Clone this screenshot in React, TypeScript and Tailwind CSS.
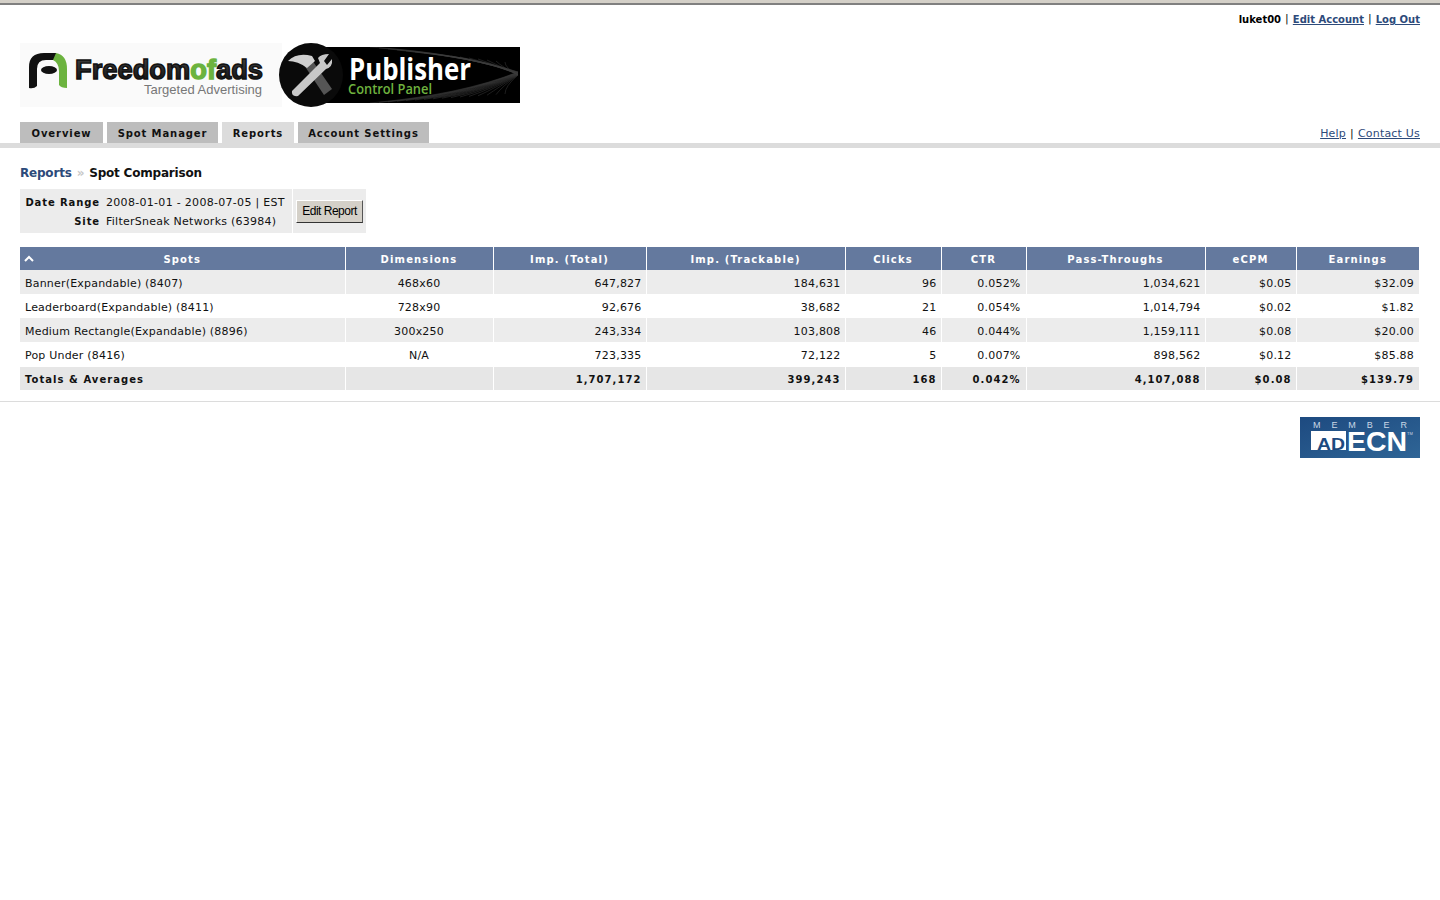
import React from "react";

const font = "font-['DejaVu_Sans','Liberation_Sans',sans-serif]";

const columns = [
  { label: "Spots", width: "w-[325px]" },
  { label: "Dimensions", width: "w-[148px]" },
  { label: "Imp. (Total)", width: "w-[153px]" },
  { label: "Imp. (Trackable)", width: "w-[199px]" },
  { label: "Clicks", width: "w-[96px]" },
  { label: "CTR", width: "w-[85px]" },
  { label: "Pass-Throughs", width: "w-[179px]" },
  { label: "eCPM", width: "w-[91px]" },
  { label: "Earnings", width: "w-[123px]" },
];

const rows = [
  ["Banner(Expandable) (8407)", "468x60", "647,827", "184,631", "96", "0.052%", "1,034,621", "$0.05", "$32.09"],
  ["Leaderboard(Expandable) (8411)", "728x90", "92,676", "38,682", "21", "0.054%", "1,014,794", "$0.02", "$1.82"],
  ["Medium Rectangle(Expandable) (8896)", "300x250", "243,334", "103,808", "46", "0.044%", "1,159,111", "$0.08", "$20.00"],
  ["Pop Under (8416)", "N/A", "723,335", "72,122", "5", "0.007%", "898,562", "$0.12", "$85.88"],
];

const totals = ["Totals & Averages", "", "1,707,172", "399,243", "168", "0.042%", "4,107,088", "$0.08", "$139.79"];

const waves = Array.from({ length: 16 }, (_, i) => i);

// numeric cells sit 1px closer to the column edge, except CTR and the last column
function cellAlign(i: number) {
  if (i === 0) return "pl-[5px] pr-[5px] text-left";
  if (i === 1) return "px-[5px] text-center";
  if (i === 5 || i === 8) return "pl-[5px] pr-[5px] text-right";
  return "pl-[5px] pr-[4px] text-right";
}

function Logo() {
  return (
    <svg width="500" height="64" viewBox="0 0 500 64" className="block">
      <defs>
        <linearGradient id="word" x1="0" y1="0" x2="0" y2="1">
          <stop offset="0" stopColor="#444" />
          <stop offset="1" stopColor="#0c0c0c" />
        </linearGradient>
        <clipPath id="banner">
          <rect x="290" y="4" width="210" height="56" />
        </clipPath>
      </defs>
      <rect x="0" y="0" width="262" height="64" fill="#fafafa" />
      {/* F/A mark */}
      <path d="M9 45 V24 Q9 10 24 10 H36 L37 17 H26 Q17 17 17 26 V43 Q14 46 9 45Z" fill="#111" />
      <path d="M36 10 Q47 12 47 26 V45 Q41 45 39 42 V28 Q39 20 33 17Z" fill="#6cb33f" />
      <ellipse cx="29" cy="27" rx="8" ry="4" fill="#111" />
      <text x="55" y="36" fontFamily="Liberation Sans" fontWeight="700" fontSize="27" stroke="#111" strokeWidth="1.4" textLength="188" lengthAdjust="spacingAndGlyphs">
        <tspan fill="url(#word)">Freedom</tspan>
        <tspan fill="#6cb33f" stroke="#6cb33f">of</tspan>
        <tspan fill="url(#word)">ads</tspan>
      </text>
      <text x="124" y="51" fontFamily="Liberation Sans" fontSize="13" fill="#777" textLength="118">Targeted Advertising</text>

      <rect x="290" y="4" width="210" height="56" fill="#000" />
      <g fill="none" stroke="#3c3c3c" strokeWidth="0.5" clipPath="url(#banner)">
        {waves.map((i) => (
          <path key={i} d={`M${350 + i * 9} ${4 + i} Q${440 + i * 3} ${10 + i} 498 ${29 + i * 0.2} Q${440 + i * 3} ${52 - i * 0.6} ${350 + i * 9} ${60 - i * 0.6}`} />
        ))}
      </g>
      <circle cx="291" cy="32" r="32" fill="#0a0a0a" />
      {/* crossed hammer and wrench */}
      <path d="M284 22 L292 17 L312 46 L304 52Z" fill="#555" />
      <path d="M268 18 Q277 9 292 13 L295 18 L287 25 Q278 18 268 18Z" fill="#d0d0d0" />
      <path d="M272 48 L300 20 L298 15 Q301 11 309 11 L304 18 L307 22 L312 16 Q313 24 306 26 L278 53 Q271 54 272 48Z" fill="#c8c8c8" />
      <text x="329" y="37" fontFamily="Open Sans" fontWeight="700" fontSize="30" fill="#fff" textLength="122" lengthAdjust="spacingAndGlyphs">Publisher</text>
      <text x="328" y="51" fontFamily="Open Sans" fontWeight="600" fontSize="14" fill="#6fb23f" textLength="84" lengthAdjust="spacingAndGlyphs">Control Panel</text>
    </svg>
  );
}

function AdEcnBadge() {
  return (
    <svg width="120" height="41" viewBox="0 0 120 41" className="block">
      <defs>
        <linearGradient id="badge" x1="0" y1="0" x2="1" y2="1">
          <stop offset="0" stopColor="#1d4a80" />
          <stop offset="1" stopColor="#2f6596" />
        </linearGradient>
      </defs>
      <rect width="120" height="41" fill="url(#badge)" />
      <text x="13" y="11" fontFamily="Liberation Sans" fontSize="9" fill="#cbd8e6" textLength="94">MEMBER</text>
      <path d="M11 14 H46 V33 H11Z" fill="#fff" />
      <text x="17" y="33" fontFamily="Liberation Sans" fontWeight="700" fontSize="17" fill="#1d4a80" textLength="28" lengthAdjust="spacingAndGlyphs">AD</text>
      <text x="47" y="34" fontFamily="Liberation Sans" fontWeight="700" fontSize="27" fill="#fff" textLength="60" lengthAdjust="spacingAndGlyphs">ECN</text>
      <text x="107" y="18" fontFamily="Liberation Sans" fontSize="4" fill="#cbd8e6">TM</text>
    </svg>
  );
}

export default function App() {
  return (
    <div className={`${font} min-h-[900px] bg-white text-[11px] text-[#111]`}>
      <div className="h-[5px] border-b-2 border-[#808080] bg-[#d4d0c8]" />

      <div className="flex h-[28px] items-center justify-end gap-[4px] pr-5 pt-[1px] text-[10px]">
        <span className="font-bold text-black">luket00</span>
        <span className="text-[11px]">|</span>
        <a className="font-bold text-[#2d4a7a] underline">Edit Account</a>
        <span className="text-[11px]">|</span>
        <a className="font-bold text-[#2d4a7a] underline">Log Out</a>
      </div>

      {/* Logo */}
      <div className="px-5 pt-[10px]">
        <Logo />
      </div>

      {/* Tabs */}
      <div className="mt-[15px] flex items-end justify-between border-b-[5px] border-[#dcdcdc] px-5">
        <div className="flex gap-1 text-[10px] font-bold tracking-[0.9px]">
          <div className="flex h-[21px] w-[83px] items-center justify-center bg-[#bdbdbd] pt-[2px]">Overview</div>
          <div className="flex h-[21px] w-[111px] items-center justify-center bg-[#bdbdbd] pt-[2px]">Spot Manager</div>
          <div className="flex h-[21px] w-[72px] items-center justify-center bg-[#dcdcdc] pt-[2px]">Reports</div>
          <div className="flex h-[21px] w-[131px] items-center justify-center bg-[#bdbdbd] pt-[2px]">Account Settings</div>
        </div>
        <div className="flex gap-[4px] pb-[1px] tracking-[0.2px]">
          <a className="text-[#2d4a7a] underline">Help</a>
          <span>|</span>
          <a className="text-[#2d4a7a] underline">Contact Us</a>
        </div>
      </div>

      {/* Breadcrumb */}
      <div className="mt-[15px] flex h-[18px] items-center gap-[5px] px-5 pt-[2px] text-[12px] font-bold tracking-[-0.2px]">
        <a className="text-[#2d4a7a]">Reports</a>
        <span className="text-[#c8c8c8]">»</span>
        <span>Spot Comparison</span>
      </div>

      {/* Report summary */}
      <div className="mx-5 mt-[8px] flex h-[44px] w-[346px] bg-[#ececec]">
        <div className="grid w-[273px] grid-cols-[80px_1fr] content-center gap-x-[6px] gap-y-[3px] border-r border-white pt-[3px] leading-[16px]">
          <span className="text-right text-[10px] font-bold tracking-[0.9px]">Date Range</span>
          <span className="whitespace-nowrap tracking-[0.3px]">2008-01-01 - 2008-07-05 | EST</span>
          <span className="text-right text-[10px] font-bold tracking-[0.9px]">Site</span>
          <span className="whitespace-nowrap tracking-[0.25px]">FilterSneak Networks (63984)</span>
        </div>
        <div className="flex flex-1 items-center justify-center">
          <button className="flex h-[23px] w-[67px] items-center justify-center border border-t-white border-l-white border-r-[#555] border-b-[#333] bg-[#d4d0c8] font-['Liberation_Sans',sans-serif] text-[12px] tracking-[-0.5px] text-black">
            Edit Report
          </button>
        </div>
      </div>

      {/* Spot table */}
      <div className="mx-5 mt-[14px]">
        <table className="w-[1399px] table-fixed border-collapse">
          <colgroup>
            {columns.map((c) => (
              <col key={c.label} className={c.width} />
            ))}
          </colgroup>
          <thead>
            <tr className="h-[23px] bg-[#64799e] text-white">
              {columns.map((c, i) => (
                <th key={c.label} className="relative border-r border-white p-0 pt-[2px] text-center text-[10px] font-bold tracking-[1.15px] last:border-r-0">
                  {i === 0 && (
                    <svg width="10" height="7" viewBox="0 0 10 7" className="absolute left-[4px] top-[8px]">
                      <path d="M1 6 L5 2 L9 6" fill="none" stroke="#fff" strokeWidth="2" />
                    </svg>
                  )}
                  {c.label}
                </th>
              ))}
            </tr>
          </thead>
          <tbody>
            {rows.map((row, r) => (
              <tr key={row[0]} className={r % 2 === 0 ? "h-[24px] bg-[#ececec]" : "h-[24px] bg-white"}>
                {row.map((cell, i) => (
                  <td key={i} className={`border-r border-white pb-0 pt-[4px] tracking-[0.2px] last:border-r-0 ${cellAlign(i)}`}>
                    {cell}
                  </td>
                ))}
              </tr>
            ))}
            <tr className="h-[24px] border-t border-white bg-[#e6e6e6] text-[10px] font-bold">
              {totals.map((cell, i) => (
                <td key={i} className={`border-r border-white pb-0 pt-[2px] tracking-[1.05px] last:border-r-0 ${cellAlign(i)}`}>
                  {cell}
                </td>
              ))}
            </tr>
          </tbody>
        </table>
      </div>

      {/* Footer */}
      <div className="mt-[11px] flex justify-end border-t border-[#dcdcdc] px-5 pt-[15px]">
        <AdEcnBadge />
      </div>
    </div>
  );
}
